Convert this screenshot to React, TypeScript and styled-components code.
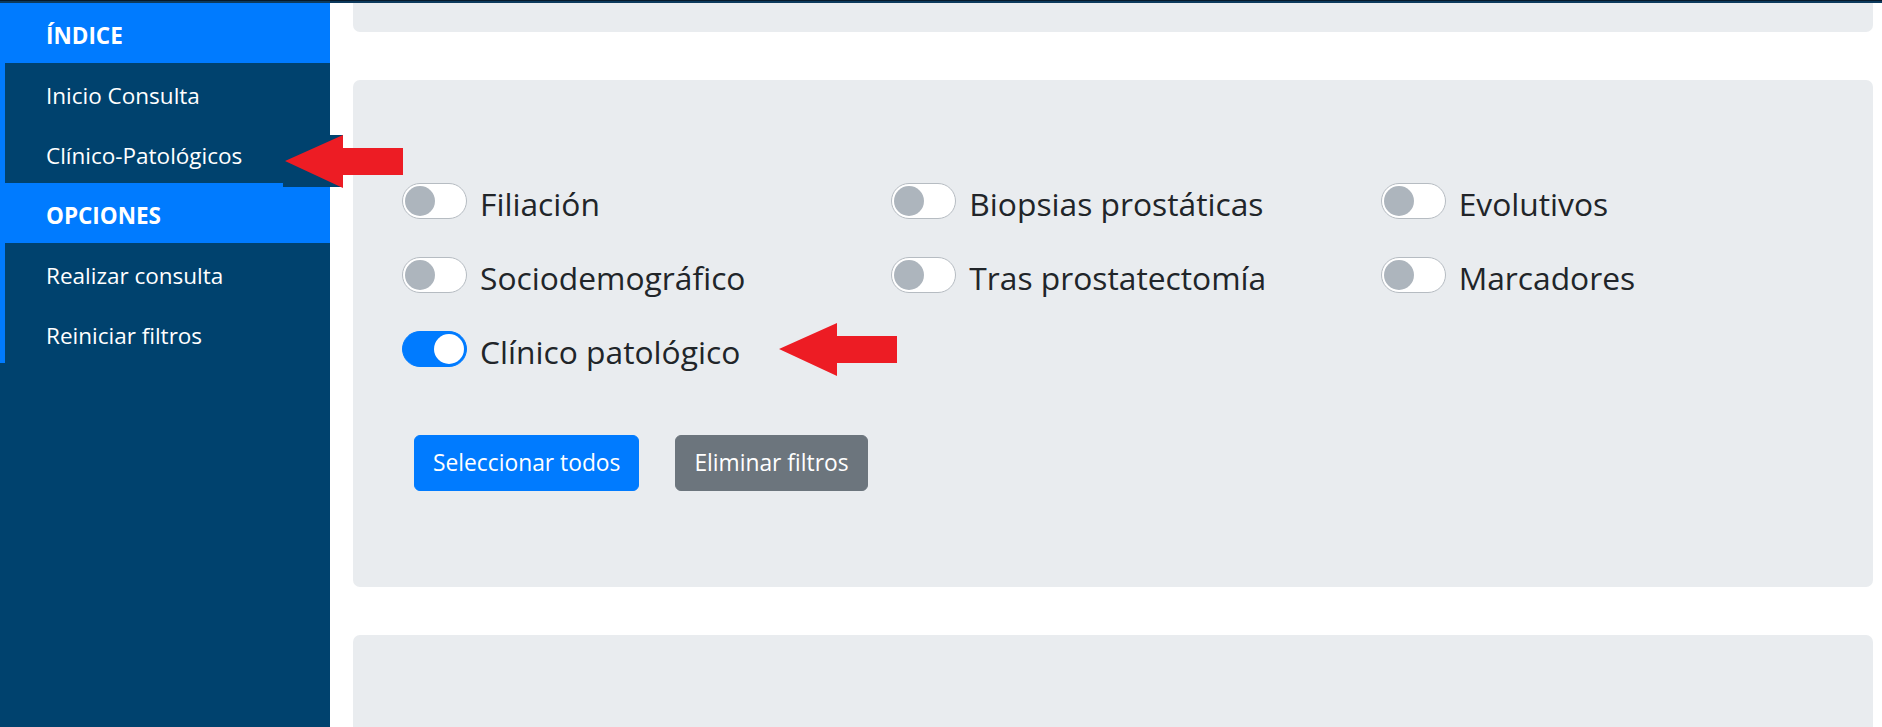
import React from "react";
import styled, { createGlobalStyle } from "styled-components";

const GlobalStyle = createGlobalStyle`
    html, body {
        margin: 0;
        padding: 0;
        background: #fff;
        font-family: "Open Sans", "Noto Sans", sans-serif;
        color: #212529;
    }
`;

const Page = styled.div`
    position: relative;
    display: flex;
    flex-direction: column;
    width: 1882px;
    height: 727px;
    overflow: hidden;
`;

const TopBar = styled.div`
    height: 2px;
    flex-shrink: 0;
    background: #0c3a5d;
    border-top: 1px solid #071a2b;
`;

const Body = styled.div`
    display: flex;
    flex: 1;
    min-height: 0;
`;

const Sidebar = styled.nav`
    width: 330px;
    flex-shrink: 0;
    background: #00426e;
`;

const SectionHeader = styled.div`
    box-sizing: border-box;
    height: 60px;
    padding: 5px 0 0 46px;
    line-height: 55px;
    background: #007bff;
    color: #fff;
    font-size: 22.5px;
    font-weight: 700;
`;

const NavList = styled.ul`
    list-style: none;
    margin: 0;
    padding: 0;
    border-left: 5px solid #007bff;
`;

const NavItem = styled.li`
    box-sizing: border-box;
    height: 60px;
    padding: 5px 0 0 41px;
    line-height: 55px;
    color: #fff;
    font-size: 22.5px;
`;

const Main = styled.main`
    flex: 1;
    min-width: 0;
    padding: 0 9px 0 23px;
`;

const Card = styled.section<{ $clipped?: boolean }>`
    background: #e9ecef;
    border-radius: ${(p) => (p.$clipped ? "0 0 7px 7px" : "7px")};
    margin-bottom: 48px;
    padding: ${(p) => (p.$clipped ? "0" : "96px 48px")};
    height: ${(p) => (p.$clipped ? "29px" : "auto")};
    box-sizing: ${(p) => (p.$clipped ? "border-box" : "content-box")};
`;

const Columns = styled.div`
    display: grid;
    grid-template-columns: repeat(3, 1fr);
    margin: 0 -22px;
`;

const Column = styled.div`
    display: flex;
    flex-direction: column;
    gap: 24px;
    padding: 0 22px;
`;

const SwitchRow = styled.label`
    display: flex;
    align-items: center;
    height: 50px;
    padding-left: 1px;
`;

const Track = styled.span<{ $on: boolean }>`
    display: flex;
    justify-content: ${(p) => (p.$on ? "flex-end" : "flex-start")};
    align-items: center;
    flex-shrink: 0;
    box-sizing: border-box;
    width: 65px;
    height: 36px;
    padding: 0 2px;
    border-radius: 18px;
    border: 1px solid ${(p) => (p.$on ? "#007bff" : "#b6bcc2")};
    background: ${(p) => (p.$on ? "#007bff" : "#fff")};
`;

const Knob = styled.span<{ $on: boolean }>`
    width: 30px;
    height: 30px;
    border-radius: 50%;
    background: ${(p) => (p.$on ? "#fff" : "#adb5bd")};
`;

const SwitchLabel = styled.span`
    margin-left: 13px;
    padding-top: 5px;
    font-size: 31.75px;
    line-height: 45px;
    color: #212529;
    white-space: nowrap;
`;

const ButtonRow = styled.div`
    display: flex;
    gap: 36px;
    margin: 61px 0 0 13px;
`;

const Button = styled.button<{ $variant: "primary" | "secondary" }>`
    font-family: inherit;
    font-size: 22.8px;
    line-height: 36px;
    padding: 9px 18px;
    border-radius: 6px;
    color: #fff;
    border: 1px solid ${(p) => (p.$variant === "primary" ? "#007bff" : "#6c757d")};
    background: ${(p) => (p.$variant === "primary" ? "#007bff" : "#6c757d")};
`;

const ArrowBox = styled.svg`
    position: absolute;
    width: 120px;
    height: 53px;
`;

// tip is the arrow point; a pasted arrow in the sidebar carries a bit of navy behind its head
const Arrow = ({ tipX, top, patch }: { tipX: number; top: number; patch?: boolean }) => (
    <ArrowBox viewBox="0 0 120 53" style={{ left: tipX - 2, top }}>
        {patch && <rect x="0" y="0" width="60" height="52" fill="#00426e" />}
        <polygon
            points="2,26 60,0 60,13 120,13 120,40 60,40 60,53"
            fill="#ed1c24"
        />
    </ArrowBox>
);

const Switch = ({ label, on = false }: { label: string; on?: boolean }) => (
    <SwitchRow>
        <Track $on={on}>
            <Knob $on={on} />
        </Track>
        <SwitchLabel>{label}</SwitchLabel>
    </SwitchRow>
);

const columns: { label: string; on?: boolean }[][] = [
    [{ label: "Filiación" }, { label: "Sociodemográfico" }, { label: "Clínico patológico", on: true }],
    [{ label: "Biopsias prostáticas" }, { label: "Tras prostatectomía" }],
    [{ label: "Evolutivos" }, { label: "Marcadores" }],
];

export default function App() {
    return (
        <Page>
            <GlobalStyle />
            <TopBar />
            <Body>
                <Sidebar>
                    <SectionHeader>ÍNDICE</SectionHeader>
                    <NavList>
                        <NavItem>Inicio Consulta</NavItem>
                        <NavItem>Clínico-Patológicos</NavItem>
                    </NavList>
                    <SectionHeader>OPCIONES</SectionHeader>
                    <NavList>
                        <NavItem>Realizar consulta</NavItem>
                        <NavItem>Reiniciar filtros</NavItem>
                    </NavList>
                </Sidebar>
                <Main>
                    <Card $clipped />
                    <Card>
                        <Columns>
                            {columns.map((col, i) => (
                                <Column key={i}>
                                    {col.map((s) => (
                                        <Switch key={s.label} label={s.label} on={s.on} />
                                    ))}
                                </Column>
                            ))}
                        </Columns>
                        <ButtonRow>
                            <Button $variant="primary">Seleccionar todos</Button>
                            <Button $variant="secondary">Eliminar filtros</Button>
                        </ButtonRow>
                    </Card>
                    <Card />
                </Main>
            </Body>
            <Arrow tipX={285} top={135} patch />
            <Arrow tipX={779} top={323} />
        </Page>
    );
}
